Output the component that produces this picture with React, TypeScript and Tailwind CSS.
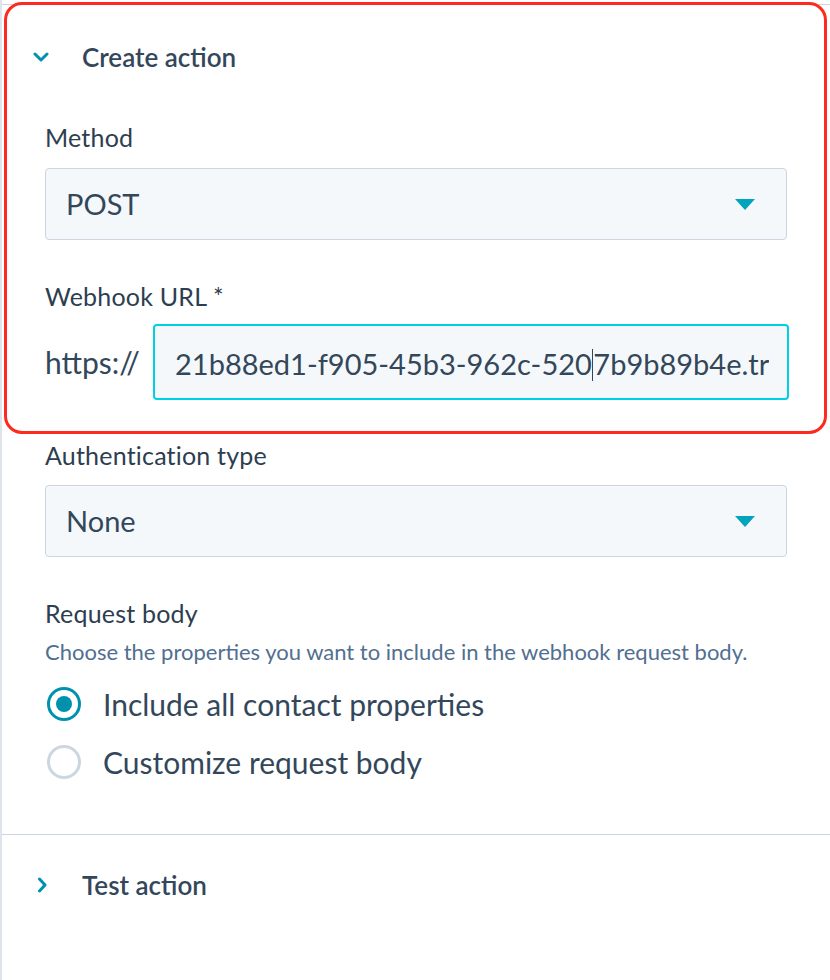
import React from "react";

const font = { fontFamily: "Lato, 'Noto Sans', sans-serif" };

function ChevronDown() {
  return (
    <svg width="16" height="10" viewBox="0 0 16 10" className="block">
      <path d="M2 2 L8 8 L14 2" fill="none" stroke="#0091ae" strokeWidth="3" strokeLinecap="round" strokeLinejoin="round" />
    </svg>
  );
}

function ChevronRight() {
  return (
    <svg width="10" height="16" viewBox="0 0 10 16" className="block">
      <path d="M2.5 2 L8 8 L2.5 14" fill="none" stroke="#0091ae" strokeWidth="3" strokeLinecap="round" strokeLinejoin="round" />
    </svg>
  );
}

function Caret() {
  return (
    <svg width="20" height="11" viewBox="0 0 20 11" className="block">
      <path d="M0 0 H20 L10 11 Z" fill="#00a4bd" />
    </svg>
  );
}

function Select({ value }: { value: string }) {
  return (
    <div className="flex h-[72px] w-[742px] items-center justify-between rounded-[4px] border border-[#cbd6e2] bg-[#f5f8fa] pl-[20px] pr-[31px]">
      <span className="text-[29px] leading-[36px] text-[#33475b]">{value}</span>
      <Caret />
    </div>
  );
}

function Radio({ checked, label }: { checked: boolean; label: string }) {
  return (
    <div className="flex h-[44px] items-center">
      <div
        className={
          checked
            ? "flex h-[34px] w-[34px] items-center justify-center rounded-full border-[3px] border-[#0091ae] bg-white"
            : "flex h-[34px] w-[34px] items-center justify-center rounded-full border-[3px] border-[#cbd6e2] bg-white"
        }
      >
        {checked && <div className="h-[16px] w-[16px] rounded-full bg-[#0091ae]" />}
      </div>
      <span className="ml-[22px] text-[30px] leading-[40px] text-[#33475b]">{label}</span>
    </div>
  );
}

function Label({ children, className }: { children: React.ReactNode; className: string }) {
  return (
    <div className={"h-[28px] text-[25px] leading-[28px] tracking-[0.2px] text-[#2d3e50] " + className}>{children}</div>
  );
}

export default function App() {
  return (
    <div className="relative h-[980px] w-[830px] overflow-hidden bg-white" style={font}>
      <div className="h-full border-l-2 border-[#dfe3eb] pt-[4px]">
        <div className="border-t border-[#cbd6e2]">
          {/* Create action section */}
          <div className="pt-[32px]">
            <div className="flex h-[40px] items-center">
              <div className="ml-[31px] w-[49px]">
                <ChevronDown />
              </div>
              <span className="text-[26px] font-semibold text-[#33475b]">Create action</span>
            </div>
            <div className="pl-[43px]">
              <Label className="mt-[46px]">Method</Label>
              <div className="mt-[17px]">
                <Select value="POST" />
              </div>
              <Label className="mt-[42px]">Webhook URL *</Label>
              <div className="mt-[14px] flex items-center">
                <span className="w-[108px] text-[30px] leading-[36px] text-[#33475b]">https://</span>
                <div className="flex h-[76px] w-[636px] items-center rounded-[4px] border-2 border-[#00d0e4] bg-[#f5f8fa] pl-[20px] pr-[18px]">
                  <div className="overflow-hidden whitespace-nowrap text-[29px] leading-[36px] text-[#33475b]">
                    21b88ed1-f905-45b3-962c-520
                    <span className="inline-block h-[32px] w-[1.5px] translate-y-[6px] bg-[#33475b] align-baseline" />
                    7b9b89b4e.trigger.hubspot.com
                  </div>
                </div>
              </div>
              <Label className="mt-[41px]">Authentication type</Label>
              <div className="mt-[16px]">
                <Select value="None" />
              </div>
              <Label className="mt-[42px]">Request body</Label>
              <div className="mt-[12px] h-[26px] whitespace-nowrap text-[22px] leading-[26px] text-[#516f90]">
                Choose the properties you want to include in the webhook request body.
              </div>
              <div className="mt-[17px] flex flex-col gap-[14px] pl-[2px]">
                <Radio checked label="Include all contact properties" />
                <Radio checked={false} label="Customize request body" />
              </div>
            </div>
          </div>
          <div className="mt-[50px] border-t border-[#cbd6e2]">
            <div className="mt-[30px] flex h-[40px] items-center">
              <div className="ml-[35px] w-[45px]">
                <ChevronRight />
              </div>
              <span className="text-[26px] font-semibold text-[#33475b]">Test action</span>
            </div>
          </div>
        </div>
      </div>
      {/* annotation highlight */}
      <div className="pointer-events-none absolute left-[4px] top-[2px] h-[432px] w-[823px] rounded-[18px] border-[3px] border-[#ff2a1f]" />
    </div>
  );
}
